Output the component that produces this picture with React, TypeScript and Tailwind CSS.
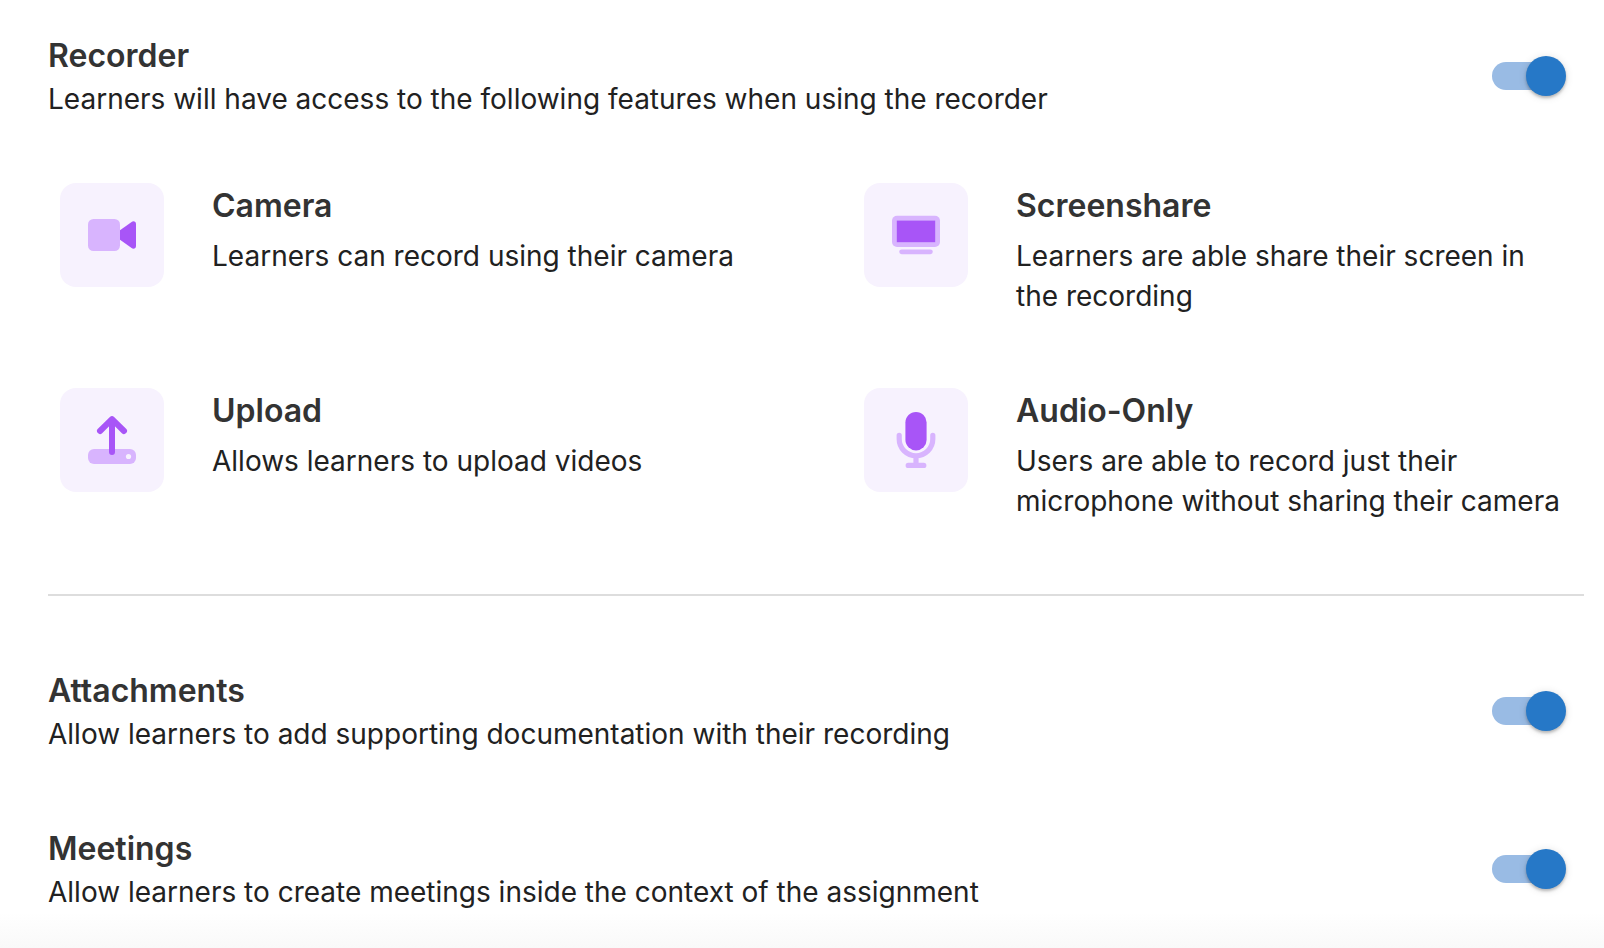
import { useState, type ReactNode } from 'react'
import clsx from 'clsx'

interface ToggleProps {
  id: string
  checked: boolean
  onChange: (value: boolean) => void
}

function Toggle({ id, checked, onChange }: ToggleProps) {
  return (
    <span className="relative flex h-10 w-[74px] shrink-0 items-center">
      <span className={clsx('h-7 w-[68px] rounded-full', checked ? 'bg-[#99bbe4]' : 'bg-gray-300')} />
      <span
        className={clsx(
          'absolute top-0 size-10 rounded-full transition-all',
          'shadow-[0_2px_3px_rgba(0,0,0,0.24),0_1px_8px_rgba(0,0,0,0.12)]',
          checked ? 'right-0 bg-[#2678c7]' : 'right-8 bg-white'
        )}
      />
      <input
        id={id}
        type="checkbox"
        role="switch"
        checked={checked}
        onChange={e => onChange(e.target.checked)}
        className="absolute inset-0 cursor-pointer appearance-none"
      />
    </span>
  )
}

interface SettingRowProps {
  id: string
  title: string
  description: string
}

function SettingRow({ id, title, description }: SettingRowProps) {
  const [enabled, setEnabled] = useState(true)

  return (
    <div className="flex items-center justify-between gap-8 pr-[38px] pl-12">
      <div>
        <h2 className="text-[32px] leading-[46px] font-semibold text-[#333333]">
          <label htmlFor={id}>{title}</label>
        </h2>
        <p className="text-[28px] leading-10">{description}</p>
      </div>
      <Toggle id={id} checked={enabled} onChange={setEnabled} />
    </div>
  )
}

interface FeatureProps {
  title: string
  description: string
  children: ReactNode
}

function Feature({ title, description, children }: FeatureProps) {
  return (
    <li className="flex items-start gap-12">
      <div className="flex size-[104px] shrink-0 items-center justify-center rounded-2xl bg-[#f7f2fe]">
        <svg viewBox="0 0 48 48" className="size-12 overflow-visible" fill="none" aria-hidden="true">
          {children}
        </svg>
      </div>
      <div>
        <h3 className="text-[32px] leading-[46px] font-semibold text-[#333333]">{title}</h3>
        <p className="mt-[7px] text-[28px] leading-10">{description}</p>
      </div>
    </li>
  )
}

export default function App() {
  return (
    <main className="bg-white pt-[33px] font-['Inter',sans-serif] text-[#212121] [font-variant-ligatures:none]">
      <SettingRow
        id="recorder"
        title="Recorder"
        description="Learners will have access to the following features when using the recorder"
      />

      <ul className="mt-16 mr-9 ml-[60px] grid grid-cols-2 gap-x-[100px] gap-y-[72px]">
        <Feature title="Camera" description="Learners can record using their camera">
          <rect y="8" width="32" height="32" rx="5.5" fill="#d8b4fe" />
          <path
            d="M32 19.2 L43.6 10.9 C45.6 9.5 48 10.6 48 13 V35 C48 37.4 45.6 38.5 43.6 37.1 L32 28.8Z"
            fill="#a855f7"
          />
        </Feature>

        <Feature title="Screenshare" description="Learners are able share their screen in the recording">
          <rect y="4.8" width="48" height="31.2" rx="5" fill="#d8b4fe" />
          <rect x="4.8" y="9.6" width="38.4" height="21.6" fill="#a855f7" />
          <rect x="7.2" y="38.4" width="33.6" height="4.8" rx="2.4" fill="#d8b4fe" />
        </Feature>

        <Feature title="Upload" description="Allows learners to upload videos">
          <rect y="33" width="48" height="15" rx="6" fill="#d8b4fe" />
          <circle cx="40.5" cy="40.5" r="2.6" fill="#f7f2fe" />
          <path
            d="M24 36V3.2M12 15L24 3.2L36 15"
            stroke="#a855f7"
            strokeWidth="6"
            strokeLinecap="round"
            strokeLinejoin="round"
          />
        </Feature>

        <Feature title="Audio-Only" description="Users are able to record just their microphone without sharing their camera">
          <path
            d="M7.2 19.3V23a16.8 16.8 0 0 0 33.6 0V19.3M24 40V49.3M16.2 49.4H31.8"
            stroke="#d8b4fe"
            strokeWidth="5.2"
            strokeLinecap="round"
          />
          <rect x="13.4" y="-4" width="21.2" height="38.4" rx="10.6" fill="#a855f7" />
        </Feature>
      </ul>

      <hr className="mt-[73px] mr-5 mb-[72px] ml-12 border-t-2 border-[#dddddd]" />

      <div className="flex flex-col gap-[72px]">
        <SettingRow
          id="attachments"
          title="Attachments"
          description="Allow learners to add supporting documentation with their recording"
        />
        <SettingRow
          id="meetings"
          title="Meetings"
          description="Allow learners to create meetings inside the context of the assignment"
        />
      </div>

      {/* Fade at the end of the list */}
      <div className="h-9 bg-linear-to-b from-white to-[#f9f9f9]" />
    </main>
  )
}
